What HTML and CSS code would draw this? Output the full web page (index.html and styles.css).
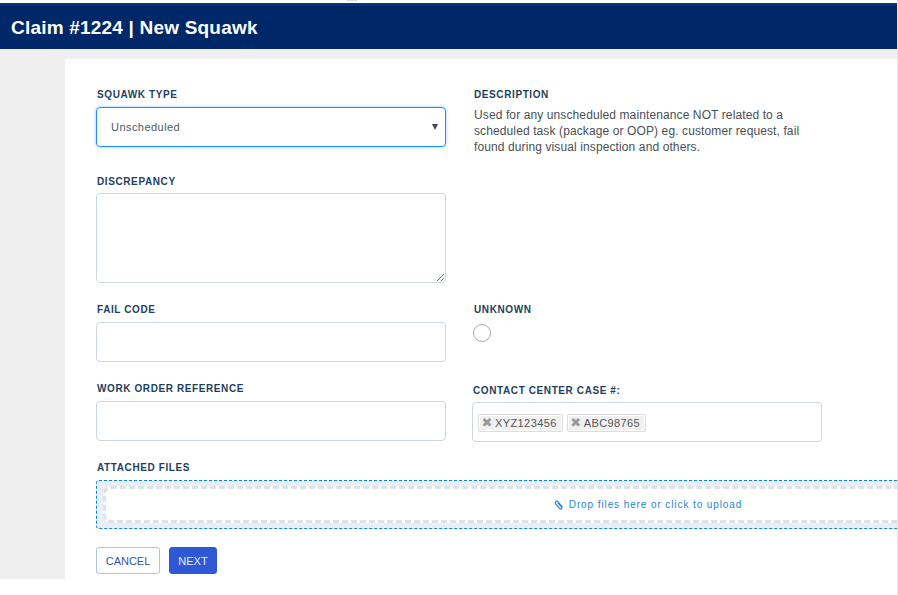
FILE: index.html
```html
<!DOCTYPE html>
<html lang="en">
<head>
<meta charset="utf-8">
<title>Claim #1224 | New Squawk</title>
<link rel="stylesheet" href="styles.css">
</head>
<body>
<div class="topstrip"><span class="topmark"></span></div>
<header class="appbar"><h1 class="appbar-title">Claim #1224 | New Squawk</h1></header>
<div class="page">
  <main class="card">
    <div class="row row-type">
      <div class="field">
        <label class="label">SQUAWK TYPE</label>
        <div class="select"><span>Unscheduled</span><span class="caret"></span></div>
      </div>
      <div class="field field-right">
        <div class="label">DESCRIPTION</div>
        <p class="desc">Used for any unscheduled maintenance NOT related to a scheduled task (package or OOP) eg. customer request, fail found during visual inspection and others.</p>
      </div>
    </div>
    <div class="row row-disc">
      <div class="field">
        <label class="label label-tight">DISCREPANCY</label>
        <textarea class="textarea"></textarea>
      </div>
    </div>
    <div class="row row-fail">
      <div class="field">
        <label class="label">FAIL CODE</label>
        <input class="input" type="text">
      </div>
      <div class="field field-right">
        <div class="label">UNKNOWN</div>
        <span class="radio"></span>
      </div>
    </div>
    <div class="row row-wo">
      <div class="field">
        <label class="label">WORK ORDER REFERENCE</label>
        <input class="input" type="text">
      </div>
      <div class="field field-right field-contact">
        <div class="label label-tight">CONTACT CENTER CASE #:</div>
        <div class="tags">
          <span class="tag"><span class="tag-x">&#10006;</span>XYZ123456</span>
          <span class="tag"><span class="tag-x">&#10006;</span>ABC98765</span>
        </div>
      </div>
    </div>
    <div class="files">
      <div class="label">ATTACHED FILES</div>
      <div class="dropzone">
        <div class="dropzone-inner">
          <svg class="clip" viewBox="0 0 10 10" width="10" height="10" aria-hidden="true"><path d="M8.5 7.2 4 1.8C3.3 1 2.3 1 1.7 1.6 1.1 2.2 1.1 3 1.7 3.8L5.8 8.6C6.3 9.2 7 9.2 7.5 8.8 8 8.4 8 7.8 7.6 7.2L3.8 2.8" fill="none" stroke="#2a86c8" stroke-width="1.2"/></svg>
          <span>Drop files here or click to upload</span>
        </div>
      </div>
    </div>
    <div class="actions">
      <button class="btn btn-cancel" type="button">CANCEL</button>
      <button class="btn btn-next" type="button">NEXT</button>
    </div>
  </main>
</div>
</body>
</html>
```

FILE: styles.css
```css
* { box-sizing: border-box; }
html, body { margin: 0; padding: 0; height: 100%; overflow: hidden; background: #fff; }
body { font-family: "Liberation Sans", Arial, sans-serif; color: #33475b; border-right: 1px solid #e4e4e4; }

.topstrip { height: 3px; background: #fff; padding-left: 347px; }
.topmark { display: block; width: 10px; height: 1px; background: #d6dce4; }

.appbar { height: 46px; background: #002868; border-top: 2px solid #003a80; padding: 2px 0 0 11px; display: flex; align-items: center; }
.appbar-title { margin: 0; color: #fff; font-size: 19px; font-weight: 700; line-height: 20px; letter-spacing: 0.2px; }

.page { height: 530px; background: #efefef; padding: 10px 0 0 65px; overflow: hidden; }
.card { height: 520px; background: #fff; padding: 29px 0 0 31px; overflow: hidden; }

.row { display: flex; gap: 26px; }
.field { width: 350px; flex: none; }
.row-type { height: 88px; padding-top: 1px; }
.row-disc { height: 128px; }
.row-fail { height: 79px; }
.row-wo { height: 79px; }

.label { display: block; font-size: 10px; font-weight: 700; line-height: 12px; letter-spacing: 0.6px; color: #1f3f5c; margin: 0 0 6px 1px; }
.label-tight { margin-bottom: 5px; }
.field-right .label { margin-left: 2px; }
.field-contact .label { margin-left: 1px; }

.select { height: 40px; border: 1px solid #1e90ff; border-radius: 4px; box-shadow: 0 0 3px rgba(30,144,255,.55); padding: 0 7px 0 14px; display: flex; align-items: center; justify-content: space-between; font-size: 11px; letter-spacing: 0.45px; color: #4d5a66; }
.caret { width: 0; height: 0; border-left: 3px solid transparent; border-right: 3px solid transparent; border-top: 6px solid #3f4a55; }

.desc { margin: 6px 0 0 2px; width: 335px; font-size: 12px; line-height: 16px; letter-spacing: 0.11px; color: #4a4f55; }

.textarea, .input { display: block; width: 350px; border: 1px solid #cdd6e0; border-radius: 4px; background: #fff; outline: none; padding: 0; margin: 0; }
.textarea { height: 90px; }
.input { height: 40px; }

.radio { display: block; width: 18px; height: 18px; border: 1px solid #a9a9a9; border-radius: 50%; margin: 8px 0 0 1px; }

.field-contact { padding-top: 2px; }
.tags { height: 40px; width: 350px; border: 1px solid #cdd6e0; border-radius: 4px; padding: 11px 0 0 5px; display: flex; gap: 4px; align-items: flex-start; }
.tag { height: 18px; border: 1px solid #dcdcdc; border-radius: 2px; background: #f1f1f1; box-shadow: inset 0 0 0 1px #fff; padding: 0 5px 1px 3px; display: flex; align-items: center; font-size: 11px; letter-spacing: 0.4px; color: #555; }
.tag-x { width: 10px; margin-right: 3px; display: flex; justify-content: center; color: #999; font-size: 13px; line-height: 16px; letter-spacing: 0; font-family: "DejaVu Sans", sans-serif; }

.dropzone { width: 1104px; height: 49px; border: 1px dashed #0f86d2; border-radius: 3px; background: #e8eff6; padding: 5px 6px; }
.dropzone-inner { height: 37px; background: #fff; border: 3px dashed #dfe1ea; border-radius: 8px; display: flex; align-items: center; justify-content: center; gap: 5px; font-size: 10px; letter-spacing: 0.9px; color: #2a86c8; }
.clip { flex: none; }

.actions { display: flex; gap: 9px; margin-top: 18px; }
.btn { height: 27px; border-radius: 3px; font: 11px/1 "Liberation Sans", Arial, sans-serif; padding: 1px 0 0; cursor: pointer; }
.btn-cancel { width: 64px; background: #fff; border: 1px solid #a9c4ee; color: #2f58a8; }
.btn-next { width: 48px; background: #2f58d6; border: 1px solid #2f58d6; color: #e8eefb; }
```
